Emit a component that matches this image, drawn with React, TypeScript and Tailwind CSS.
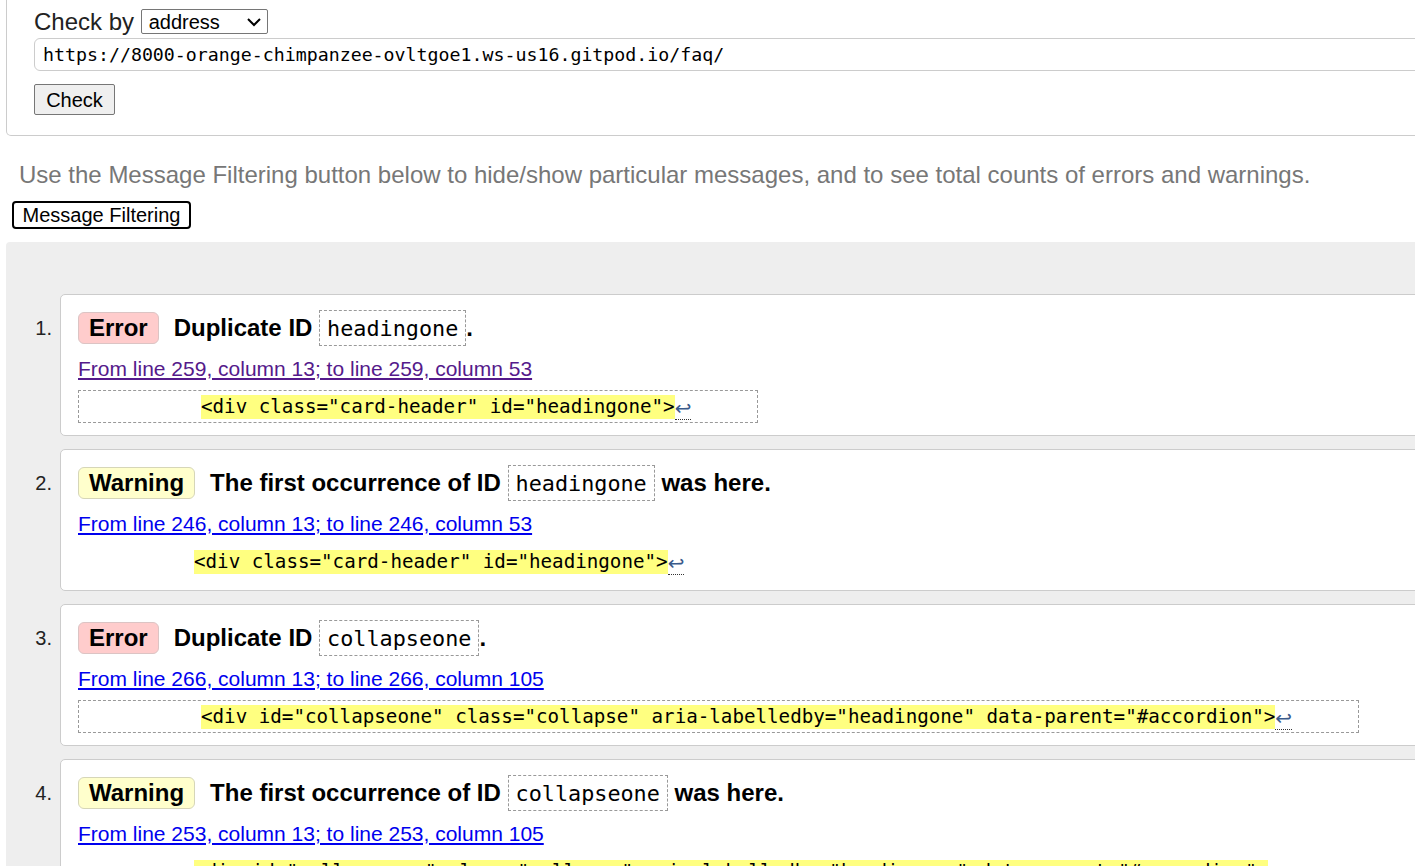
import React from 'react';

type Msg = {
  n: number;
  kind: 'error' | 'warning';
  lead: string;
  id: string;
  tail: string;
  link: string;
  visited?: boolean;
  code: string;
};

const messages: Msg[] = [
  {
    n: 1,
    kind: 'error',
    lead: 'Duplicate ID',
    id: 'headingone',
    tail: '.',
    link: 'From line 259, column 13; to line 259, column 53',
    visited: true,
    code: '<div class="card-header" id="headingone">',
  },
  {
    n: 2,
    kind: 'warning',
    lead: 'The first occurrence of ID',
    id: 'headingone',
    tail: ' was here.',
    link: 'From line 246, column 13; to line 246, column 53',
    code: '<div class="card-header" id="headingone">',
  },
  {
    n: 3,
    kind: 'error',
    lead: 'Duplicate ID',
    id: 'collapseone',
    tail: '.',
    link: 'From line 266, column 13; to line 266, column 105',
    code: '<div id="collapseone" class="collapse" aria-labelledby="headingone" data-parent="#accordion">',
  },
  {
    n: 4,
    kind: 'warning',
    lead: 'The first occurrence of ID',
    id: 'collapseone',
    tail: ' was here.',
    link: 'From line 253, column 13; to line 253, column 105',
    code: '<div id="collapseone" class="collapse" aria-labelledby="headingone" data-parent="#accordion">',
  },
];

function Message({ m }: { m: Msg }) {
  const isError = m.kind === 'error';
  return (
    <li className="flex">
      <div className="w-[54px] shrink-0 pt-[16px] pr-[8px]">
        <div className="flex h-[36px] items-center justify-end text-[20px] text-[#222]">{m.n}.</div>
      </div>
      <div className="flex-1 rounded-[5px] border border-[#ccc] bg-white pt-[15px] pb-[12px] pl-[17px]">
        <div className="flex h-[36px] items-center whitespace-pre text-[24px] font-bold text-black">
          <span
            className={
              isError
                ? 'flex h-[32px] items-center rounded-[6px] border border-[#dcc4c4] bg-[#ffcccc] px-[10px]'
                : 'flex h-[32px] items-center rounded-[6px] border border-[#d6d6b8] bg-[#ffffcc] px-[10px]'
            }
          >
            {isError ? 'Error' : 'Warning'}
          </span>
          <span className="ml-[15px]">{m.lead} </span>
          <code className="flex h-[36px] items-center border border-dashed border-[#999] px-[7px] pt-[2px] font-['DejaVu_Sans_Mono',monospace] text-[21.8px] font-normal">
            {m.id}
          </code>
          <span>{m.tail}</span>
        </div>
        <div className="mt-[11px] h-[24px] text-[21px] leading-[24px]">
          <a href="#" className={m.visited ? 'text-[#551a8b] underline' : 'text-[#0000ee] underline'}>
            {m.link}
          </a>
        </div>
        <div
          className={
            isError
              ? 'mt-[9px] flex h-[33px] w-fit items-center border border-dashed border-[#999] pr-[66px] pl-[122px]'
              : 'mt-[9px] flex h-[33px] w-fit items-center border border-dashed border-transparent pr-[66px] pl-[115px]'
          }
        >
          <span className="bg-[#ffff80] font-['DejaVu_Sans_Mono',monospace] text-[19.2px] leading-[24px] whitespace-pre text-black">
            {m.code}
          </span>
          <span className="mt-[4px] border-b border-dotted border-[#333] font-['DejaVu_Sans',sans-serif] text-[20px] leading-[22px] text-[#3a5a8a]">
            ↩
          </span>
        </div>
      </div>
    </li>
  );
}

export default function App() {
  return (
    <div className="h-[866px] w-full overflow-hidden bg-white font-['Liberation_Sans',Arial,sans-serif]">
      <div className="w-[1520px]">
        <div className="ml-[6px] rounded-b-[5px] border-x border-b border-[#ccc] pt-[9px] pb-[20px] pl-[27px]">
          <div className="flex h-[25px] items-center whitespace-pre text-[24px] text-[#222]">
            <span>Check by </span>
            <div className="flex h-[25px] w-[127px] items-center justify-between rounded-[2px] border border-[#767676] bg-white pr-[5px] pl-[7px] text-[20px] text-black">
              <span>address</span>
              <svg width="16" height="10" viewBox="0 0 16 10" fill="none">
                <polyline points="2,2 8,8 14,2" stroke="#000" strokeWidth="2" />
              </svg>
            </div>
          </div>
          <div className="mt-[4px] flex h-[33px] items-center rounded-[6px] border border-[#ccc] bg-white pl-[8px] font-['DejaVu_Sans_Mono',monospace] text-[18.25px] text-black">
            https://8000-orange-chimpanzee-ovltgoe1.ws-us16.gitpod.io/faq/
          </div>
          <button className="mt-[13px] h-[31px] w-[81px] rounded-[2px] border border-[#767676] bg-[#efefef] text-[20px] leading-[28px] text-black">
            Check
          </button>
        </div>

        <p className="mt-[25px] pl-[19px] text-[24px] leading-[28px] text-[#777]">
          Use the Message Filtering button below to hide/show particular messages, and to see total counts of errors and warnings.
        </p>
        <button className="mt-[12px] ml-[12px] h-[28px] w-[179px] rounded-[4px] border-2 border-black bg-white text-[20px] leading-[22px] text-black">
          Message Filtering
        </button>

        <div className="mt-[13px] ml-[6px] h-[700px] rounded-tl-[4px] bg-[#eee] pt-[52px]">
          <ol className="flex flex-col gap-[13px]">
            {messages.map((m) => (
              <Message key={m.n} m={m} />
            ))}
          </ol>
        </div>
      </div>
    </div>
  );
}
